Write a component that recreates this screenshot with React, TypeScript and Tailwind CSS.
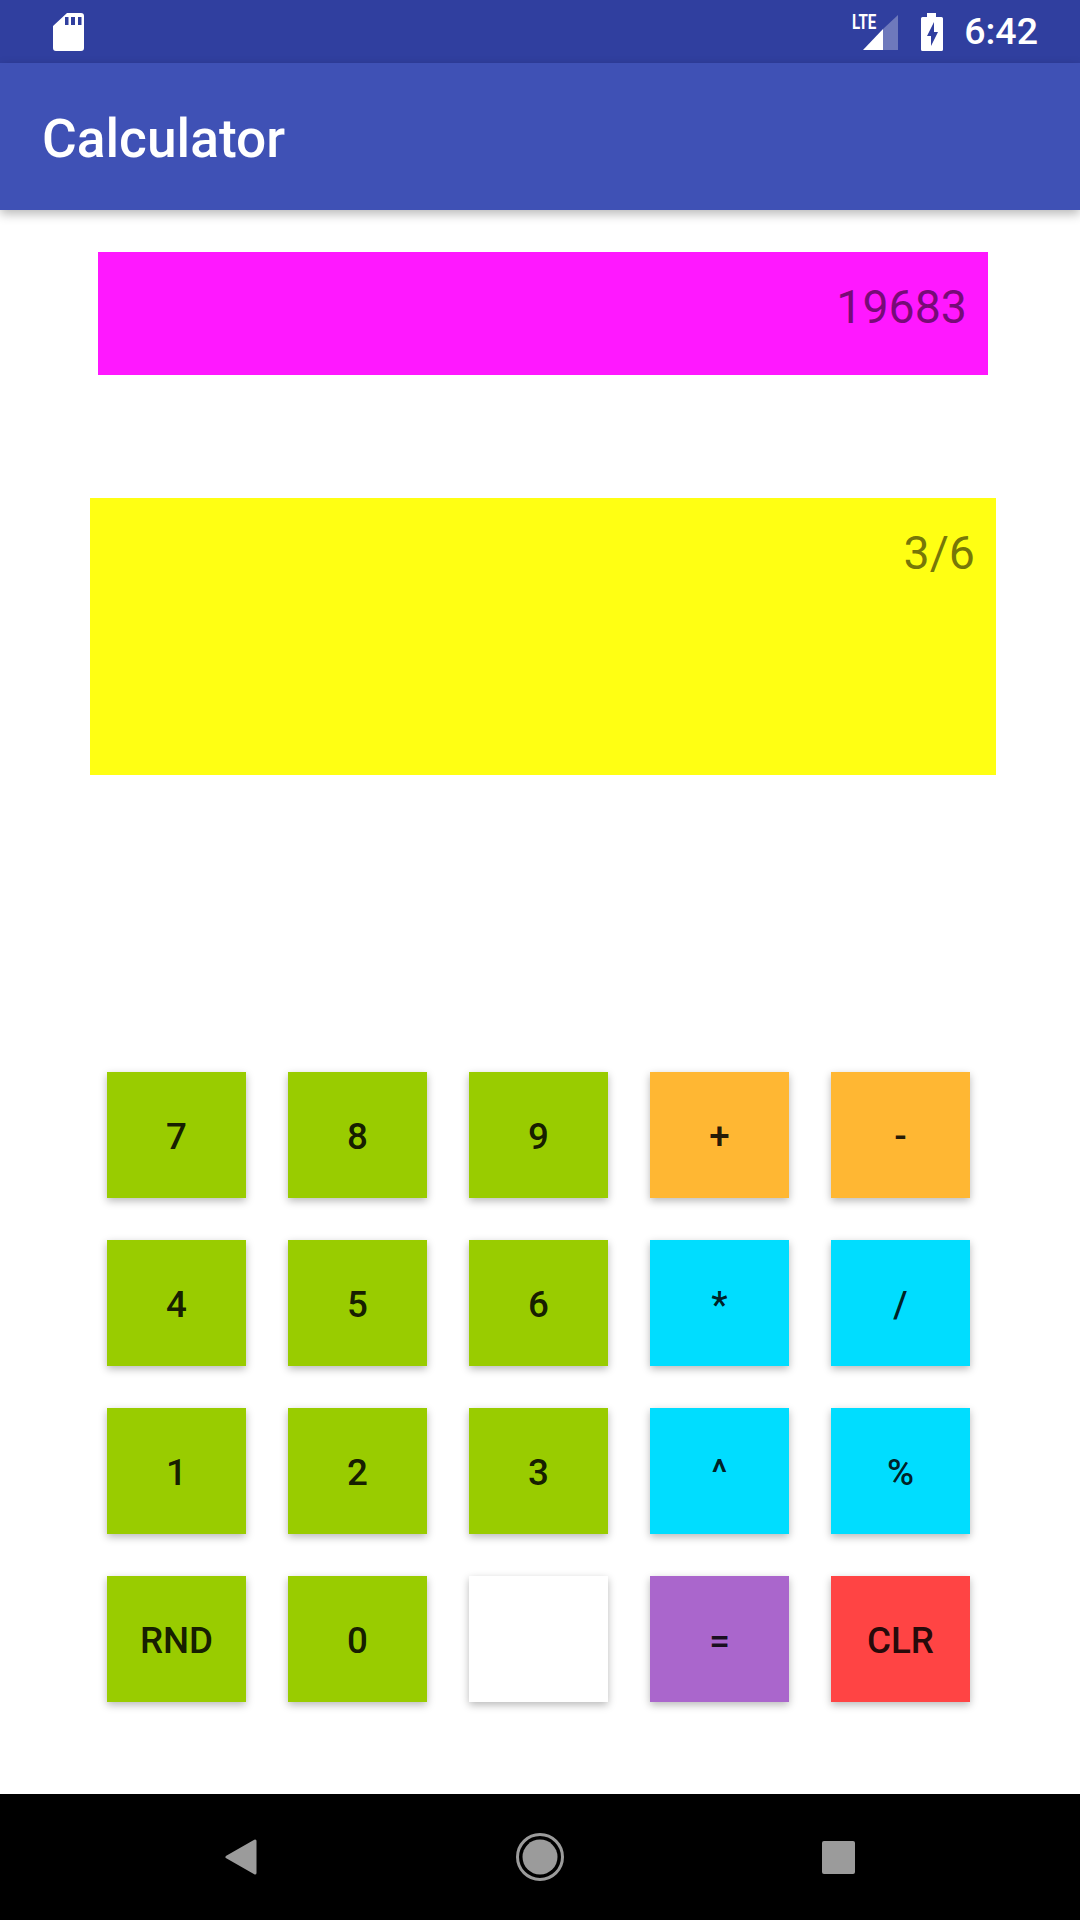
const keys = [
  { label: "7", color: "bg-[#99cc00]" },
  { label: "8", color: "bg-[#99cc00]" },
  { label: "9", color: "bg-[#99cc00]" },
  { label: "+", color: "bg-[#ffb733]" },
  { label: "-", color: "bg-[#ffb733]" },
  { label: "4", color: "bg-[#99cc00]" },
  { label: "5", color: "bg-[#99cc00]" },
  { label: "6", color: "bg-[#99cc00]" },
  { label: "*", color: "bg-[#00ddff]" },
  { label: "/", color: "bg-[#00ddff]" },
  { label: "1", color: "bg-[#99cc00]" },
  { label: "2", color: "bg-[#99cc00]" },
  { label: "3", color: "bg-[#99cc00]" },
  { label: "^", color: "bg-[#00ddff]" },
  { label: "%", color: "bg-[#00ddff]" },
  { label: "RND", color: "bg-[#99cc00]" },
  { label: "0", color: "bg-[#99cc00]" },
  { label: "", color: "bg-white" },
  { label: "=", color: "bg-[#aa66cc]" },
  { label: "CLR", color: "bg-[#ff4444]" },
];

export default function App() {
  return (
    <div className="w-[1080px] h-[1920px] flex flex-col bg-white font-['Roboto',sans-serif] overflow-hidden">
      {/* Status bar */}
      <div className="h-[63px] shrink-0 bg-[#303f9f] flex items-center text-white">
        <svg className="ml-[53px] mb-[-1px]" width="31" height="38" viewBox="0 0 31 38">
          <path
            fill="#fff"
            fillRule="evenodd"
            d="M14 0H28a3 3 0 0 1 3 3V35a3 3 0 0 1-3 3H3a3 3 0 0 1-3-3V13ZM12 4V12H15.500V4ZM18 4V12H22V4ZM25 4V12H28.500V4Z"
          />
        </svg>
        <div className="ml-auto flex items-center">
          <div className="relative w-[46px] h-[37px] mt-[1px] flex justify-end">
            <svg width="35" height="37" viewBox="0 0 35 37">
              <path fill="#fff" d="M0 36L20 15V36Z" />
              <path fill="#fff" fillOpacity="0.3" d="M20 15L35 1V36H20Z" />
            </svg>
            <span className="absolute left-0 top-[-2px] text-[21px] leading-[21px] font-bold scale-x-[0.72] origin-left">LTE</span>
          </div>
          <svg className="ml-[23px]" width="22" height="38" viewBox="0 0 22 38">
            <path
              fill="#fff"
              fillRule="evenodd"
              d="M6 0H15V4H20.500A1.500 1.500 0 0 1 22 5.500V36.500A1.500 1.500 0 0 1 20.500 38H1.500A1.500 1.500 0 0 1 0 36.500V5.500A1.500 1.500 0 0 1 1.500 4H6ZM13 9L6 23H10V33L17 19H13Z"
            />
          </svg>
          <span className="ml-[21px] mr-[42px] text-[37.500px] leading-none font-medium">6:42</span>
        </div>
      </div>

      {/* App bar */}
      <div className="h-[147px] shrink-0 bg-[#3f51b5] flex items-center pl-[42px] pt-[7px] shadow-[0_4px_10px_rgba(0,0,0,0.28)] z-10">
        <span className="text-[53.300px] leading-none font-medium text-white">Calculator</span>
      </div>

      {/* Main */}
      <div className="flex-1 flex flex-col bg-white">
        <div className="ml-[98px] mt-[42px] w-[890px] h-[123px] bg-[#ff18ff] flex justify-end pr-[21px] pt-[27px]">
          <span className="text-[46.500px] leading-[56px] text-black/55">19683</span>
        </div>
        <div className="ml-[90px] mt-[123px] w-[906px] h-[277px] bg-[#ffff13] flex justify-end pr-[21px] pt-[27px]">
          <span className="text-[46.500px] leading-[56px] text-black/55">3/6</span>
        </div>
        <div className="ml-[107px] mt-[297px] grid grid-cols-[repeat(5,139px)] auto-rows-[126px] gap-[42px]">
          {keys.map((key, i) => (
            <button
              key={i}
              className={`${key.color} flex items-center justify-center pt-[3px] text-[36.750px] font-medium text-black/87 shadow-[0_3px_8px_rgba(0,0,0,0.28)]`}
            >
              {key.label}
            </button>
          ))}
        </div>
      </div>

      {/* Nav bar */}
      <div className="h-[126px] shrink-0 bg-black flex items-center justify-center gap-[250px]">
        <svg width="48" height="48" viewBox="0 0 48 48">
          <path fill="#9b9b9b" stroke="#9b9b9b" strokeWidth="3" strokeLinejoin="round" d="M9 24L37 8V40Z" />
        </svg>
        <svg width="48" height="48" viewBox="0 0 48 48">
          <circle cx="24" cy="24" r="22.500" fill="none" stroke="#9b9b9b" strokeWidth="3" />
          <circle cx="24" cy="24" r="17.500" fill="#9b9b9b" />
        </svg>
        <svg width="48" height="48" viewBox="0 0 48 48">
          <rect x="8" y="8" width="33" height="33" rx="2" fill="#9b9b9b" />
        </svg>
      </div>
    </div>
  );
}
